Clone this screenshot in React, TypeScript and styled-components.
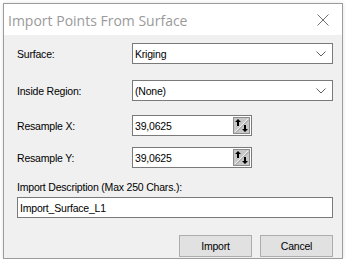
import React from 'react';
import styled, { createGlobalStyle } from 'styled-components';

const GlobalStyle = createGlobalStyle`
  html, body {
    margin: 0;
    padding: 0;
    background: #ffffff;
  }
  * {
    box-sizing: border-box;
  }
`;

const Window = styled.div`
  margin: 3px 0 0 3px;
  width: 340px;
  height: 256px;
  border: 1px solid #9c9c9c;
  background: #f0f0f0;
  box-shadow: 0 0 4px rgba(0, 0, 0, 0.12);
  display: flex;
  flex-direction: column;
  font-family: 'Liberation Sans', Arial, sans-serif;
  font-size: 10.5px;
  letter-spacing: -0.2px;
  color: #000;
`;

const TitleBar = styled.div`
  flex-shrink: 0;
  height: 31px;
  background: #ffffff;
  display: flex;
  align-items: center;
  justify-content: space-between;
  padding: 0 13px 0 4px;
`;

const Title = styled.span`
  font-family: 'Open Sans', 'Noto Sans', sans-serif;
  font-size: 14px;
  letter-spacing: 0;
  color: #9a9a9a;
  padding-top: 1px;
`;

const Body = styled.div`
  flex: 1;
  padding: 8px 9px 0 13px;
  display: flex;
  flex-direction: column;
`;

const Row = styled.div<{ $top: number }>`
  display: grid;
  grid-template-columns: 115px 1fr;
  align-items: center;
  height: 21px;
  margin-top: ${(p) => p.$top}px;
`;

const Label = styled.span`
  white-space: nowrap;
`;

const Field = styled.div<{ $width?: number }>`
  flex-shrink: 0;
  height: 21px;
  width: ${(p) => (p.$width ? `${p.$width}px` : '100%')};
  background: #ffffff;
  border: 1px solid #7a7a7a;
  display: flex;
  align-items: center;
  justify-content: space-between;
  padding: 0 0 0 2px;
`;

const Value = styled.span`
  white-space: nowrap;
`;

const Chevron = styled.svg`
  margin-right: 6px;
`;

const SpinButton = styled.svg`
  margin-right: 1px;
  display: block;
`;

const DescLabel = styled.div`
  margin-top: 12px;
  height: 15px;
  line-height: 15px;
`;

const DescInput = styled(Field)`
  margin-top: 2px;
`;

const Buttons = styled.div`
  display: flex;
  justify-content: flex-end;
  gap: 8px;
  margin-top: 17px;
`;

const Button = styled.div`
  width: 73px;
  height: 22px;
  background: #e1e1e1;
  border: 1px solid #adadad;
  display: flex;
  align-items: center;
  justify-content: center;
`;

const ComboArrow = () => (
  <Chevron width="10" height="6" viewBox="0 0 10 6">
    <path d="M0.5 0.5 L5 5 L9.5 0.5" fill="none" stroke="#606060" strokeWidth="1" />
  </Chevron>
);

const Spinner = () => (
  <SpinButton width="17" height="17" viewBox="0 0 17 17">
    <rect x="0.5" y="0.5" width="16" height="16" fill="#c8c8c8" stroke="#8c8c8c" />
    <path d="M2 15 L15 2" stroke="#f4f4f4" strokeWidth="1" />
    <path d="M3 15.5 L15.5 3" stroke="#9a9a9a" strokeWidth="1" />
    <path d="M5 2 L8 5 L6 5 L6 9 L4 9 L4 5 L2 5 Z" fill="#000" />
    <path d="M12 15 L15 12 L13 12 L13 8 L11 8 L11 12 L9 12 Z" fill="#000" />
  </SpinButton>
);

const App = () => {
  return (
    <>
      <GlobalStyle />
      <Window>
        <TitleBar>
          <Title>Import Points From Surface</Title>
          <svg width="12" height="12" viewBox="0 0 12 12">
            <path d="M0.5 0.5 L11.5 11.5 M11.5 0.5 L0.5 11.5" stroke="#707070" strokeWidth="1" />
          </svg>
        </TitleBar>
        <Body>
          <Row $top={0}>
            <Label>Surface:</Label>
            <Field>
              <Value>Kriging</Value>
              <ComboArrow />
            </Field>
          </Row>
          <Row $top={16}>
            <Label>Inside Region:</Label>
            <Field>
              <Value>(None)</Value>
              <ComboArrow />
            </Field>
          </Row>
          <Row $top={14}>
            <Label>Resample X:</Label>
            <Field $width={120}>
              <Value>39,0625</Value>
              <Spinner />
            </Field>
          </Row>
          <Row $top={11}>
            <Label>Resample Y:</Label>
            <Field $width={120}>
              <Value>39,0625</Value>
              <Spinner />
            </Field>
          </Row>
          <DescLabel>Import Description (Max 250 Chars.):</DescLabel>
          <DescInput>
            <Value>Import_Surface_L1</Value>
          </DescInput>
          <Buttons>
            <Button>Import</Button>
            <Button>Cancel</Button>
          </Buttons>
        </Body>
      </Window>
    </>
  );
};

export default App;
